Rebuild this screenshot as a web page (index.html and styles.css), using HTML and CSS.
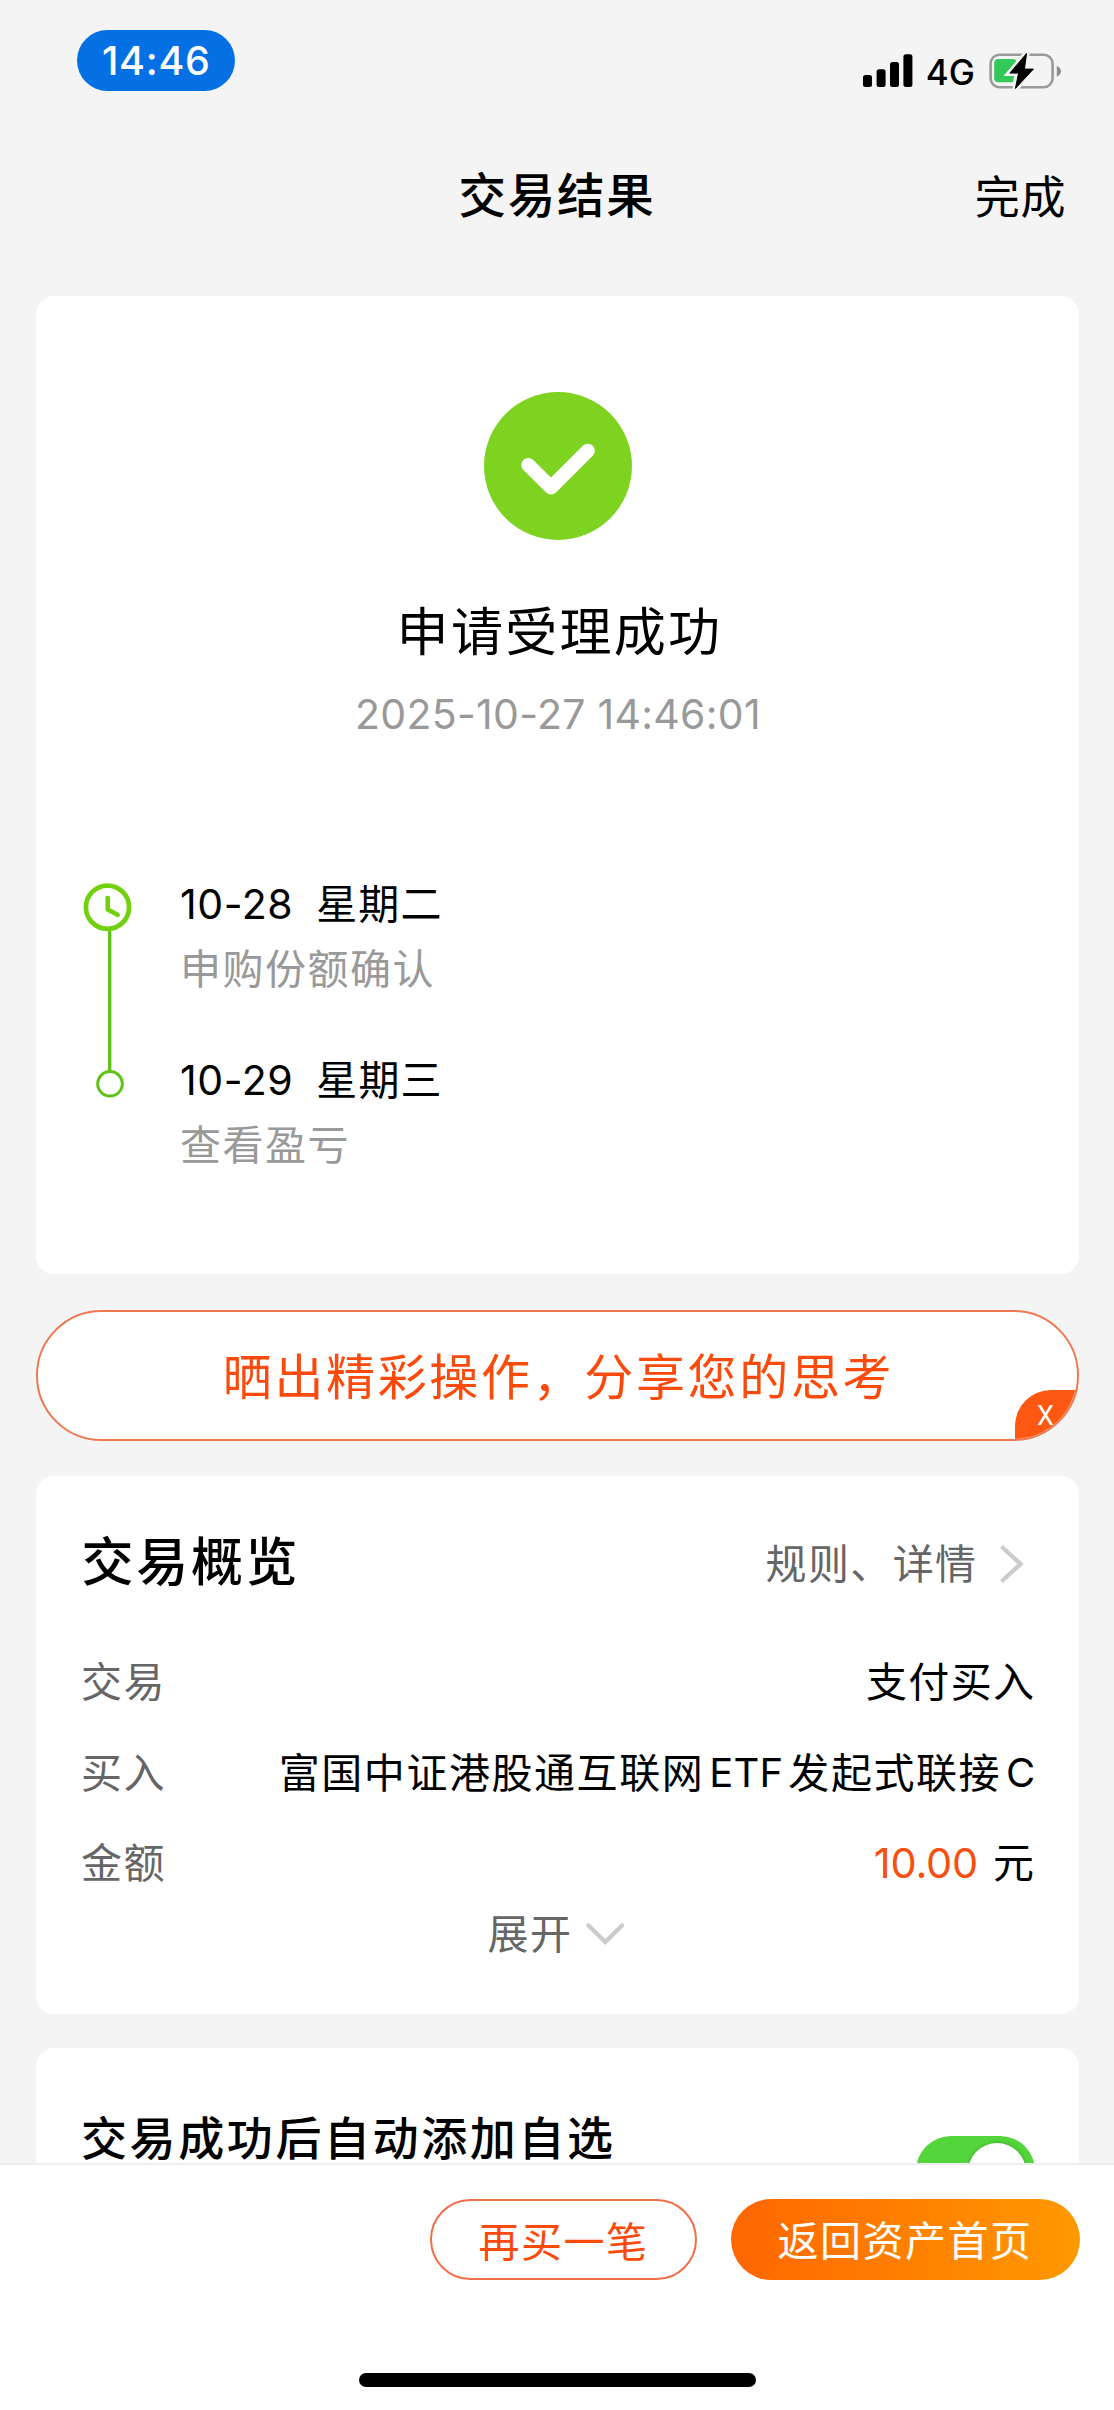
FILE: index.html
```html
<!DOCTYPE html>
<html lang="zh-CN">
<head>
<meta charset="utf-8">
<title>交易结果</title>
<link rel="stylesheet" href="styles.css">
</head>
<body>
<div class="screen">
  <div class="status">
    <div class="clock">14:46</div>
    <div class="indicators">
      <svg class="signal" width="50" height="34" viewBox="0 0 50 34">
        <rect x="0" y="22" width="9" height="12" rx="2.5"/>
        <rect x="13.6" y="16.3" width="9" height="17.7" rx="2.5"/>
        <rect x="27" y="9" width="9" height="25" rx="2.5"/>
        <rect x="40.4" y="1.3" width="9" height="32.7" rx="2.5"/>
      </svg>
      <span class="network">4G</span>
      <svg class="battery" width="73" height="38" viewBox="0 0 73 38">
        <rect x="1.6" y="1.7" width="62" height="32.6" rx="9" fill="none" stroke="#9a9a9a" stroke-width="2.6"/>
        <path d="M67.8 12.7C73.4 15.3 73.4 21.5 67.8 23.7Z" fill="#8c8c8c"/>
        <rect x="5.2" y="6" width="22.5" height="23.2" rx="4" fill="#34c759"/>
        <path d="M37.6.4 20.9 20.1H28.4L26.4 35.5 44.4 16.1H36.2Z" fill="#f4f4f4" stroke="#f4f4f4" stroke-width="6"/>
        <path d="M37.6.4 20.9 20.1H29.6L26.4 35.5 44.4 16.1H35.4Z" fill="#000" stroke="#000" stroke-width="1" stroke-linejoin="round"/>
      </svg>
    </div>
  </div>

  <header class="navbar">
    <h1 class="nav-title">交易结果</h1>
    <a class="nav-done">完成</a>
  </header>

  <main class="content">
    <section class="card result">
      <svg class="result-icon" width="148" height="148" viewBox="0 0 148 148">
        <circle cx="74" cy="74" r="74" fill="#7ed321"/>
        <path d="M44.3 73 67 95.5 103.8 58.7" fill="none" stroke="#fff" stroke-width="14" stroke-linecap="round" stroke-linejoin="round"/>
      </svg>
      <h2 class="result-title">申请受理成功</h2>
      <p class="result-time">2025-10-27 14:46:01</p>
      <div class="timeline">
        <svg class="rail" width="50" height="226" viewBox="0 0 50 226">
          <circle cx="24.5" cy="31.2" r="21.6" fill="none" stroke="#72d10f" stroke-width="4.8"/>
          <path d="M24.7 22V33.4L34.6 38.8" fill="none" stroke="#72d10f" stroke-width="4.6" stroke-linecap="round" stroke-linejoin="round"/>
          <path d="M26.7 55V195" stroke="#5fc316" stroke-width="3.3"/>
          <circle cx="27" cy="207.8" r="12.3" fill="#fff" stroke="#5fc316" stroke-width="3"/>
        </svg>
        <ol class="steps">
          <li class="step">
            <div class="step-date"><span class="num">10-28</span><span>星期二</span></div>
            <div class="step-note">申购份额确认</div>
          </li>
          <li class="step">
            <div class="step-date"><span class="num">10-29</span><span>星期三</span></div>
            <div class="step-note">查看盈亏</div>
          </li>
        </ol>
      </div>
    </section>

    <div class="share">
      <span>晒出精彩操作，分享您的思考</span>
      <span class="share-close">X</span>
    </div>

    <section class="card overview">
      <div class="overview-head">
        <h2 class="overview-title">交易概览</h2>
        <a class="overview-link">规则、详情
          <svg width="28" height="42" viewBox="0 0 28 42"><path d="M3.5 3.5 22.5 21 3.5 38.5" fill="none" stroke="#ccc" stroke-width="4.4"/></svg>
        </a>
      </div>
      <dl class="rows">
        <div class="row"><dt>交易</dt><dd>支付买入</dd></div>
        <div class="row"><dt>买入</dt><dd class="fund"><span>富国中证港股通互联网</span><span class="latin">ETF</span><span>发起式联接</span><span class="latin">C</span></dd></div>
        <div class="row"><dt>金额</dt><dd class="sum"><span class="amount">10.00</span><span>元</span></dd></div>
      </dl>
      <div class="expand">展开
        <svg width="40" height="24" viewBox="0 0 40 24"><path d="M3.5 3.5 20.3 20 37 3.5" fill="none" stroke="#ccc" stroke-width="4.4" stroke-linecap="round"/></svg>
      </div>
    </section>

    <section class="card auto">
      <h2 class="auto-title">交易成功后自动添加自选</h2>
      <div class="toggle"><div class="knob"></div></div>
    </section>
  </main>

  <footer class="footer">
    <div class="actions">
      <button class="btn again">再买一笔</button>
      <button class="btn home">返回资产首页</button>
    </div>
    <div class="home-bar"></div>
  </footer>
</div>
</body>
</html>
```
FILE: styles.css
```css
* { box-sizing: border-box; }
body, h1, h2, p, ol, dl, dd { margin: 0; padding: 0; }
body {
  font-family: Inter, "Noto Sans CJK SC", sans-serif;
  font-size: 41px;
  line-height: 56px;
  color: #000;
  background: #f4f4f4;
}
h1, h2 { font-weight: 500; }
.screen { display: flex; flex-direction: column; width: 1114px; height: 2410px; overflow: hidden; }

/* status bar */
.status { flex: none; display: flex; justify-content: space-between; align-items: flex-start; height: 120px; padding: 30px 52px 0 77px; }
.clock { width: 158px; height: 61px; padding: 1px 0 0 25px; border-radius: 31px; background: #0470e4; color: #fff; font-size: 39.5px; font-weight: 500; line-height: 61px; letter-spacing: .7px; }
.indicators { display: flex; align-items: flex-start; padding-top: 23px; }
.network { margin: 0 14px 0 13px; font-size: 35px; line-height: 38px; font-weight: 450; }

/* navigation */
.navbar { flex: none; display: grid; grid-template-columns: 1fr auto 1fr; height: 176px; padding: 46px 48px 0; line-height: 60px; }
.nav-title { grid-column: 2; font-size: 47.5px; letter-spacing: 1.8px; }
.nav-done { justify-self: end; padding-top: 2px; font-size: 45px; letter-spacing: .6px; }

/* cards */
.content { flex: 1; min-height: 0; overflow: hidden; padding: 0 35px 0 36px; }
.card { border-radius: 18px; background: #fff; }
.result { height: 978.3px; padding: 96px 46px 0 47px; }
.result-icon { display: block; margin: 0 auto; }
.result-title { margin-top: 57px; padding-left: 3px; font-size: 52px; line-height: 72px; font-weight: 400; letter-spacing: 2.3px; text-align: center; }
.result-time { margin-top: 17px; font-size: 41px; letter-spacing: .28px; color: #999; text-align: center; }

.timeline { display: flex; gap: 47px; margin-top: 134px; }
.rail { flex: none; }
.steps { display: flex; flex-direction: column; gap: 55px; list-style: none; }
.step { display: flex; flex-direction: column; gap: 9px; }
.step-date { display: flex; gap: 23px; letter-spacing: 1.2px; }
.num { letter-spacing: .55px; }
.step-note { color: #999; letter-spacing: 1.5px; }

/* share banner */
.share { position: relative; display: flex; justify-content: center; height: 131.5px; margin-top: 35.3px; padding: 3px 0 0 2px; border: 2px solid #ee7850; border-radius: 66px; overflow: hidden; background: #fff; color: #fa4a0c; font-size: 49px; line-height: 126px; letter-spacing: 2.65px; }
.share-close { position: absolute; right: -2px; bottom: -2px; width: 64px; height: 51px; padding-left: 22px; border-top-left-radius: 36px; background: #fd5812; color: #fff; font-family: Roboto, sans-serif; font-size: 27px; line-height: 52px; letter-spacing: 0; }

/* overview */
.overview { height: 538px; margin-top: 34.7px; padding: 51.5px 43.5px 0 45.5px; }
.overview-head { display: flex; justify-content: space-between; align-items: center; }
.overview-title { font-size: 52px; line-height: 72px; letter-spacing: 2.7px; }
.overview-link { display: flex; align-items: center; gap: 20px; padding-top: 2px; margin-right: 10px; color: #666; letter-spacing: 1.4px; }
.rows { display: flex; flex-direction: column; gap: 34.5px; margin-top: 55px; }
.row { display: flex; justify-content: space-between; letter-spacing: 1.4px; }
.row dt { color: #666; margin-left: -.5px; }
.fund { display: flex; gap: 5px; letter-spacing: 1.55px; }
.latin { font-size: 40px; letter-spacing: .2px; }
.sum { display: flex; gap: 15px; }
.amount { font-size: 41.5px; letter-spacing: -.2px; color: #f5500f; }
.expand { display: flex; justify-content: center; align-items: center; gap: 12px; margin-top: 15px; padding-right: 5px; color: #666; letter-spacing: 1.5px; }

/* auto-watchlist */
.auto { display: flex; justify-content: space-between; align-items: flex-start; height: 300px; margin-top: 34.3px; padding: 58px 44px 0 45px; }
.auto-title { font-size: 46px; line-height: 64px; letter-spacing: 2.6px; }
.toggle { display: flex; justify-content: flex-end; width: 119px; height: 70px; margin-top: 30px; padding: 6.5px 9px; border-radius: 35px; background: #53d63c; }
.knob { width: 58px; height: 58px; border-radius: 50%; background: #fff; box-shadow: 0 0 4px rgba(0, 0, 0, .25); }

/* footer */
.footer { flex: none; height: 247px; border-top: 2px solid #eee; padding: 34px 34.5px 0; background: #fff; }
.actions { display: flex; justify-content: flex-end; gap: 33.5px; }
.btn { height: 81px; padding: 3px 0 0; border: 0; border-radius: 41px; font: 41px/76px Inter, "Noto Sans CJK SC", sans-serif; letter-spacing: 1.5px; }
.again { width: 267px; border: 2px solid #f06e48; background: #fff; color: #fa4a0c; }
.home { width: 349px; background: linear-gradient(90deg, #ff6600, #ff9900); color: #fff; }
.home-bar { width: 397px; height: 14.5px; margin: 92.5px auto 0; border-radius: 7.5px; background: #000; }
```
